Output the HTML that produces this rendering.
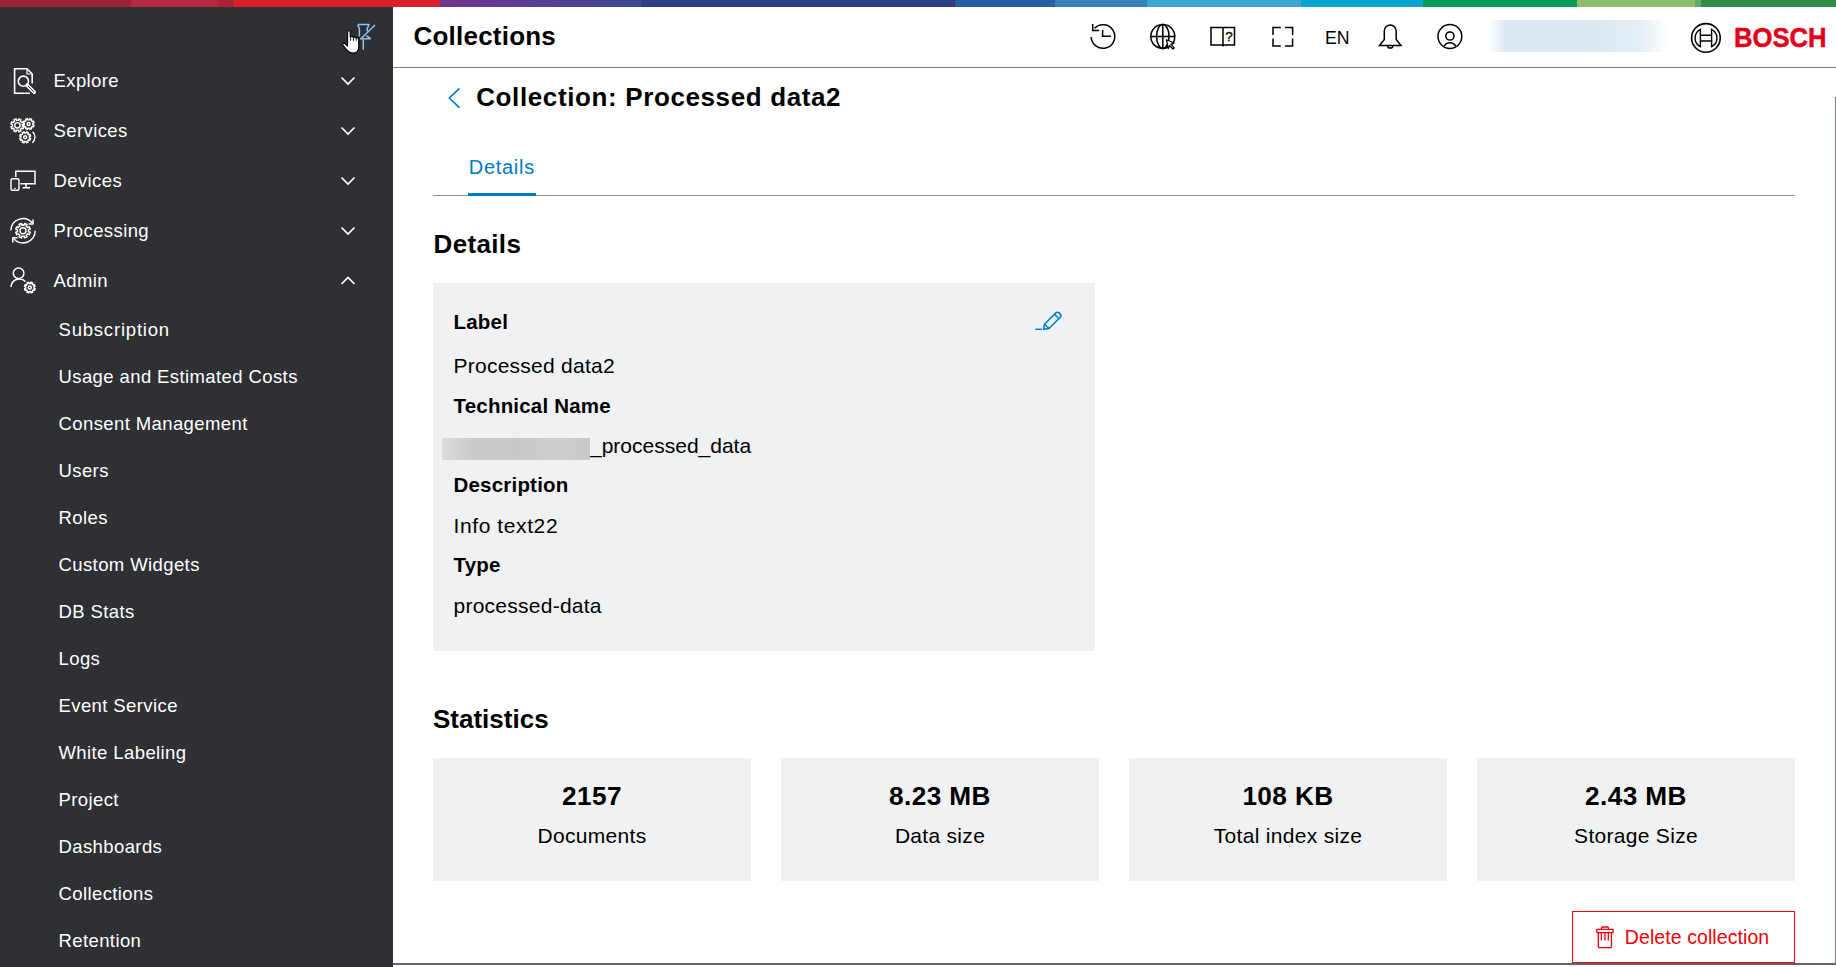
<!DOCTYPE html>
<html>
<head>
<meta charset="utf-8">
<style>
*{margin:0;padding:0;box-sizing:border-box}
html,body{width:1836px;height:967px;overflow:hidden;background:#fff;font-family:"Liberation Sans",sans-serif;color:#000}
.a{position:absolute;line-height:1;white-space:nowrap}
#sg{position:absolute;left:0;top:0;width:1836px;height:7px}
#sg div{position:absolute;top:0;height:7px}
#side{position:absolute;left:0;top:7px;width:393px;height:960px;background:#2e3033}
.si{color:#fff;font-size:18.5px;letter-spacing:0.4px}
.b{font-weight:bold}
svg{position:absolute;overflow:visible}
.panel{position:absolute;background:#eff1f2}
.lab{font-weight:bold;font-size:20.5px;letter-spacing:0.2px}
.val{font-size:21px;letter-spacing:0.25px}
.stat{position:absolute;top:758px;width:318px;height:123px;background:#eff1f2}
.num{position:absolute;left:0;width:318px;text-align:center;font-weight:bold;font-size:26.2px;letter-spacing:0.4px;line-height:1;top:24.9px}
.sl{position:absolute;left:0;width:318px;text-align:center;font-size:21px;letter-spacing:0.3px;line-height:1;top:66.5px}
</style>
</head>
<body>
<!-- supergraphic -->
<div id="sg">
<div style="left:0;width:131px;background:#9c2335"></div>
<div style="left:131px;width:87px;background:#b32a3d"></div>
<div style="left:218px;width:16px;background:#a8232f"></div>
<div style="left:234px;width:206px;background:#d8212b"></div>
<div style="left:440px;width:202px;background:linear-gradient(90deg,#74358e,#3c4a93)"></div>
<div style="left:642px;width:313px;background:#2c3f80"></div>
<div style="left:955px;width:100px;background:#275ea6"></div>
<div style="left:1055px;width:92px;background:#3580ba"></div>
<div style="left:1147px;width:154px;background:#3ba7cd"></div>
<div style="left:1301px;width:122px;background:#08a5d1"></div>
<div style="left:1423px;width:154px;background:#0a9b56"></div>
<div style="left:1577px;width:118px;background:#8cbe6e"></div>
<div style="left:1695px;width:6px;background:#5eab6c"></div>
<div style="left:1701px;width:135px;background:#2f8b45"></div>
</div>

<!-- sidebar -->
<div id="side"></div>
<div class="a si" style="left:53.5px;top:71.85px">Explore</div>
<div class="a si" style="left:53.5px;top:121.85px">Services</div>
<div class="a si" style="left:53.5px;top:171.85px">Devices</div>
<div class="a si" style="left:53.5px;top:221.85px">Processing</div>
<div class="a si" style="left:53.5px;top:271.85px">Admin</div>
<div class="a si" style="left:58.5px;top:320.75px;letter-spacing:0.8px">Subscription</div>
<div class="a si" style="left:58.5px;top:367.75px">Usage and Estimated Costs</div>
<div class="a si" style="left:58.5px;top:414.75px">Consent Management</div>
<div class="a si" style="left:58.5px;top:461.75px">Users</div>
<div class="a si" style="left:58.5px;top:508.75px">Roles</div>
<div class="a si" style="left:58.5px;top:555.75px">Custom Widgets</div>
<div class="a si" style="left:58.5px;top:602.75px">DB Stats</div>
<div class="a si" style="left:58.5px;top:649.75px">Logs</div>
<div class="a si" style="left:58.5px;top:696.75px">Event Service</div>
<div class="a si" style="left:58.5px;top:743.75px">White Labeling</div>
<div class="a si" style="left:58.5px;top:790.75px">Project</div>
<div class="a si" style="left:58.5px;top:837.75px">Dashboards</div>
<div class="a si" style="left:58.5px;top:884.75px">Collections</div>
<div class="a si" style="left:58.5px;top:931.75px">Retention</div>

<!-- header -->
<div style="position:absolute;left:393px;top:67px;width:1443px;height:1px;background:#7d8389"></div>
<div class="a b" style="left:413.5px;top:22.6px;font-size:26px;letter-spacing:0.22px">Collections</div>
<div class="a" style="left:1324.5px;top:27.5px;font-size:19px;transform:scaleX(0.93);transform-origin:left top">EN</div>

<!-- content -->
<div class="a b" style="left:476.2px;top:84.3px;font-size:26px;letter-spacing:0.62px">Collection: Processed data2</div>
<div class="a" style="left:468.8px;top:157px;font-size:20px;letter-spacing:0.7px;color:#007bc0">Details</div>
<div style="position:absolute;left:433px;top:195px;width:1362px;height:1px;background:#8a9097"></div>
<div style="position:absolute;left:468px;top:193px;width:68px;height:3px;background:#007bc0"></div>
<div class="a b" style="left:433.5px;top:231px;font-size:26px;letter-spacing:0.35px">Details</div>

<div class="panel" style="left:433px;top:283px;width:662px;height:368px"></div>
<div class="a lab" style="left:453.5px;top:312px">Label</div>
<div class="a val" style="left:453.5px;top:355px">Processed data2</div>
<div class="a lab" style="left:453.5px;top:395.5px">Technical Name</div>
<div class="a val" style="left:590px;top:434.5px;letter-spacing:0">_processed_data</div>
<div class="a lab" style="left:453.5px;top:475px">Description</div>
<div class="a val" style="left:453.5px;top:514.6px;letter-spacing:0.6px">Info text22</div>
<div class="a lab" style="left:453.5px;top:555.4px">Type</div>
<div class="a val" style="left:453.5px;top:595.2px">processed-data</div>

<div class="a b" style="left:433px;top:705.8px;font-size:26px">Statistics</div>
<div class="stat" style="left:433px"><div class="num">2157</div><div class="sl">Documents</div></div>
<div class="stat" style="left:781px"><div class="num">8.23 MB</div><div class="sl">Data size</div></div>
<div class="stat" style="left:1129px"><div class="num">108 KB</div><div class="sl">Total index size</div></div>
<div class="stat" style="left:1477px"><div class="num">2.43 MB</div><div class="sl">Storage Size</div></div>

<div style="position:absolute;left:1572px;top:911px;width:223px;height:52px;border:1px solid #ed0007"></div>
<div class="a" style="left:1624.8px;top:927.6px;font-size:19.5px;letter-spacing:0.08px;color:#ed0007">Delete collection</div>

<div style="position:absolute;left:1835px;top:97px;width:1px;height:866px;background:#7d8089"></div>
<div style="position:absolute;left:393px;top:963px;width:1443px;height:2px;background:#60646f"></div>

<svg width="1836" height="967" style="left:0;top:0" viewBox="0 0 1836 967" fill="none">
<!-- sidebar chevrons -->
<g stroke="#fff" stroke-width="1.7" stroke-linecap="butt" stroke-linejoin="miter">
<path d="M341.5 77.5 L348 84 L354.5 77.5"/>
<path d="M341.5 127.5 L348 134 L354.5 127.5"/>
<path d="M341.5 177.5 L348 184 L354.5 177.5"/>
<path d="M341.5 227.5 L348 234 L354.5 227.5"/>
<path d="M341.5 284 L348 277.5 L354.5 284"/>
</g>
<!-- explore icon -->
<g stroke="#fff" stroke-width="1.6" fill="none">
<path d="M30 93.2 H14.6 V68.8 H27 L32.2 74 V83.5"/>
<path d="M27 68.8 V74 H32.2" stroke-width="1.2"/>
<circle cx="23.4" cy="81.2" r="5.1"/>
<path d="M27.2 85.2 L34.2 92.2" stroke-width="3.6" stroke-linecap="round"/>
<path d="M27.8 85.8 L33.8 91.8" stroke="#2e3033" stroke-width="1"/>
</g>
<!-- devices -->
<g stroke="#fff" stroke-width="1.5" fill="none">
<path d="M15.8 177 V171.2 H35 V183.8 H20.5"/>
<path d="M26 184 V187.8 M22.5 187.8 H30"/>
<rect x="11" y="178.8" width="8" height="11.5" rx="1.8" stroke-width="1.4"/>
<path d="M14.3 188.3 H15.7" stroke-width="1.2"/>
</g>
<!-- services gears -->
<g stroke="#fff" stroke-width="1.4" fill="none" stroke-linejoin="round">
<path d="M17.40 120.30 L18.37 120.39 L18.81 118.85 L20.96 119.74 L20.19 121.15 L20.94 121.76 L21.55 122.51 L22.96 121.74 L23.85 123.89 L22.31 124.33 L22.40 125.30 L22.31 126.27 L23.85 126.71 L22.96 128.86 L21.55 128.09 L20.94 128.84 L20.19 129.45 L20.96 130.86 L18.81 131.75 L18.37 130.21 L17.40 130.30 L16.43 130.21 L15.99 131.75 L13.84 130.86 L14.61 129.45 L13.86 128.84 L13.25 128.09 L11.84 128.86 L10.95 126.71 L12.49 126.27 L12.40 125.30 L12.49 124.33 L10.95 123.89 L11.84 121.74 L13.25 122.51 L13.86 121.76 L14.61 121.15 L13.84 119.74 L15.99 118.85 L16.43 120.39Z"/>
<circle cx="17.4" cy="125.3" r="2.7"/>
<path d="M28.60 119.70 L29.43 119.78 L29.80 118.53 L31.62 119.28 L31.00 120.43 L31.64 120.96 L32.17 121.60 L33.32 120.98 L34.07 122.80 L32.82 123.17 L32.90 124.00 L32.82 124.83 L34.07 125.20 L33.32 127.02 L32.17 126.40 L31.64 127.04 L31.00 127.57 L31.62 128.72 L29.80 129.47 L29.43 128.22 L28.60 128.30 L27.77 128.22 L27.40 129.47 L25.58 128.72 L26.20 127.57 L25.56 127.04 L25.03 126.40 L23.88 127.02 L23.13 125.20 L24.38 124.83 L24.30 124.00 L24.38 123.17 L23.13 122.80 L23.88 120.98 L25.03 121.60 L25.56 120.96 L26.20 120.43 L25.58 119.28 L27.40 118.53 L27.77 119.78Z"/>
<circle cx="28.6" cy="124" r="1.5"/>
<path d="M25.20 133.00 L26.03 133.08 L26.40 131.83 L28.22 132.58 L27.60 133.73 L28.24 134.26 L28.77 134.90 L29.92 134.28 L30.67 136.10 L29.42 136.47 L29.50 137.30 L29.42 138.13 L30.67 138.50 L29.92 140.32 L28.77 139.70 L28.24 140.34 L27.60 140.87 L28.22 142.02 L26.40 142.77 L26.03 141.52 L25.20 141.60 L24.37 141.52 L24.00 142.77 L22.18 142.02 L22.80 140.87 L22.16 140.34 L21.63 139.70 L20.48 140.32 L19.73 138.50 L20.98 138.13 L20.90 137.30 L20.98 136.47 L19.73 136.10 L20.48 134.28 L21.63 134.90 L22.16 134.26 L22.80 133.73 L22.18 132.58 L24.00 131.83 L24.37 133.08Z"/>
<circle cx="25.2" cy="137.3" r="1.5"/>
<path d="M32.6 131.8 A7.5 7.5 0 0 1 32.4 142.8"/>
</g>
<!-- processing -->
<g stroke="#fff" stroke-width="1.5" fill="none" stroke-linejoin="round">
<path d="M10.8 230.5 A12.2 12.2 0 0 1 32.3 223"/>
<path d="M33 219.5 V224 H28.5"/>
<path d="M35.2 230.8 A12.2 12.2 0 0 1 13.6 238.5"/>
<path d="M12.8 242.5 V237.8 H17.5"/>
<path d="M23.00 225.10 L24.08 225.21 L24.59 223.47 L26.99 224.47 L26.12 226.05 L26.96 226.74 L27.65 227.58 L29.23 226.71 L30.23 229.11 L28.49 229.62 L28.60 230.70 L28.49 231.78 L30.23 232.29 L29.23 234.69 L27.65 233.82 L26.96 234.66 L26.12 235.35 L26.99 236.93 L24.59 237.93 L24.08 236.19 L23.00 236.30 L21.92 236.19 L21.41 237.93 L19.01 236.93 L19.88 235.35 L19.04 234.66 L18.35 233.82 L16.77 234.69 L15.77 232.29 L17.51 231.78 L17.40 230.70 L17.51 229.62 L15.77 229.11 L16.77 226.71 L18.35 227.58 L19.04 226.74 L19.88 226.05 L19.01 224.47 L21.41 223.47 L21.92 225.21Z"/>
<circle cx="23" cy="230.7" r="3"/>
</g>
<!-- admin -->
<g stroke="#fff" stroke-width="1.5" fill="none" stroke-linejoin="round">
<circle cx="18.6" cy="273.2" r="5.3"/>
<path d="M11 287 A8.5 8.5 0 0 1 25.5 281.5"/>
<path d="M29.80 283.30 L30.61 283.38 L30.96 282.23 L32.71 282.95 L32.14 284.01 L32.77 284.53 L33.29 285.16 L34.35 284.59 L35.07 286.34 L33.92 286.69 L34.00 287.50 L33.92 288.31 L35.07 288.66 L34.35 290.41 L33.29 289.84 L32.77 290.47 L32.14 290.99 L32.71 292.05 L30.96 292.77 L30.61 291.62 L29.80 291.70 L28.99 291.62 L28.64 292.77 L26.89 292.05 L27.46 290.99 L26.83 290.47 L26.31 289.84 L25.25 290.41 L24.53 288.66 L25.68 288.31 L25.60 287.50 L25.68 286.69 L24.53 286.34 L25.25 284.59 L26.31 285.16 L26.83 284.53 L27.46 284.01 L26.89 282.95 L28.64 282.23 L28.99 283.38Z"/>
<circle cx="29.8" cy="287.5" r="1.5"/>
</g>
<!-- pin -->
<g stroke="#8dc3f0" stroke-width="1.5" fill="none" stroke-linejoin="round">
<path d="M357.8 24.6 H369 L367.2 28.8 V31.2 M357.8 24.6 L359.4 28.5 V36.6"/>
<path d="M366.4 35.6 L370.4 38.7 H360.6"/>
<path d="M363.3 39.6 V49.7"/>
<path d="M375 25 L360.4 39.2"/>
</g>
<!-- hand cursor -->
<path d="M347.6 45.8 V31.9 Q347.6 30.7 348.9 30.7 Q350.2 30.7 350.2 31.9 V36.6 H353.1 V37.1 H356.1 V37.9 H358.7 V47 Q358.7 53.1 352.6 53.1 Q349.2 53.1 347.2 50.4 L342.9 45.1 Q342.3 43.9 343.6 43.5 Q344.6 43.2 345.5 44 L347.6 46.2 Z" fill="#fff" stroke="#000" stroke-width="1.1" stroke-linejoin="round"/>
<path d="M350.6 36.6 V40.8 M353.4 37.1 V40.8 M356.3 37.9 V40.8" stroke="#000" stroke-width="0.9"/>
<!-- header icons -->
<g stroke="#000" stroke-width="1.5" fill="none">
<!-- history -->
<path d="M91.2 37 A11.8 11.8 0 1 0 94.5 28.3" transform="translate(1000 0)"/>
<path d="M1092.7 24 V30.6 H1099.2"/>
<path d="M1102.6 30 V36.2 H1110.8"/>
<!-- globe -->
<circle cx="1162.8" cy="36.4" r="12"/>
<ellipse cx="1162.8" cy="36.4" rx="6.2" ry="12"/>
<path d="M1162.8 24.4 V48.4 M1150.8 36.4 H1174.8"/>
<!-- book -->
<path d="M1211 27.5 H1234.5 V45 H1211 Z M1223 27.5 V46.5"/>
<!-- fullscreen -->
<path d="M1273 35 V27.5 H1280.8 M1285 27.5 H1292.6 V35 M1292.6 38.5 V46 H1285 M1280.8 46 H1273 V38.5"/>
<!-- bell -->
<path d="M1379.5 45.5 L1384.3 39.5 V31 A5.9 5.9 0 0 1 1396.2 31 V39.5 L1401 45.5 Z"/>
<path d="M1387.5 45.8 A2.8 2.8 0 0 0 1393 45.8"/>
<!-- user -->
<circle cx="1449.9" cy="36.5" r="11.9"/>
<circle cx="1449.9" cy="36" r="4.1"/>
<path d="M1444 46.5 A6.5 6.5 0 0 1 1455.8 46.5"/>
</g>
<!-- globe cursor -->
<path d="M1166.5 39.8 L1174.3 43 L1170.8 44.2 L1174.3 47.8 L1173 49 L1169.5 45.5 L1168.3 48.6 Z" fill="#fff" stroke="#000" stroke-width="1.2" stroke-linejoin="round"/>
<text x="1225.2" y="41.3" font-family="Liberation Sans" font-size="13.5" fill="#000" stroke="#000" stroke-width="0.3">?</text>

<!-- bosch logo -->
<g stroke="#000" fill="none">
<circle cx="1705.9" cy="37.9" r="14.3" stroke-width="1.6"/>
<path d="M1700.4 29.4 A9.6 9.6 0 0 0 1700.4 46.6 Z M1711.6 29.4 A9.6 9.6 0 0 1 1711.6 46.6 Z" stroke-width="1.4"/>
<path d="M1700.4 35.2 H1711.6 M1700.4 41 H1711.6" stroke-width="1.6"/>
</g>

<!-- pencil -->
<g stroke="#007bc0" stroke-width="1.5" fill="none" stroke-linejoin="round">
<path d="M1035.3 329.3 H1041.8"/>
<path d="M1043.6 329.3 L1044.5 324.2 L1055.3 313.4 A2.3 2.3 0 0 1 1059.8 317.8 L1049 328.5 Z"/>
<path d="M1044.5 324.2 L1049 328.5 M1054.4 314.3 L1058.9 318.7"/>
</g>

<!-- trash -->
<g stroke="#ed0007" stroke-width="1.3" fill="none" stroke-linejoin="round">
<rect x="1596.8" y="929.3" width="16.3" height="3.3"/>
<path d="M1601.5 929.3 V928 A1 1 0 0 1 1602.5 927 H1607.5 A1 1 0 0 1 1608.5 928 V929.3"/>
<path d="M1598.3 932.6 V946.5 A1.2 1.2 0 0 0 1599.5 947.7 H1610.3 A1.2 1.2 0 0 0 1611.5 946.5 V932.6"/>
<path d="M1601.4 933 V940.5 M1604.9 933 V940.5 M1608.3 933 V940.5"/>
</g>
<!-- back chevron -->
<path d="M459.5 88.3 L449.3 98 L459.5 107.7" stroke="#007bc0" stroke-width="1.6" fill="none"/>
</svg>
<div class="a b" style="left:1734.4px;top:23.4px;font-size:28.5px;color:#e2001a;transform:scaleX(0.9);transform-origin:left top;-webkit-text-stroke:0.5px #e2001a">BOSCH</div>
<div style="position:absolute;left:1488px;top:20px;width:180px;height:32px;background:linear-gradient(90deg,rgba(221,234,243,0) 0%,#dde9f2 10%,#dbe8f1 50%,#e3eef5 85%,rgba(227,238,245,0) 100%)"></div>
<div style="position:absolute;left:442px;top:438px;width:148px;height:22px;background:linear-gradient(90deg,#dcdcdd 0%,#cbcbcc 20%,#c9c9ca 50%,#cecece 80%,#c8c8c8 100%)"></div>
</body>
</html>
